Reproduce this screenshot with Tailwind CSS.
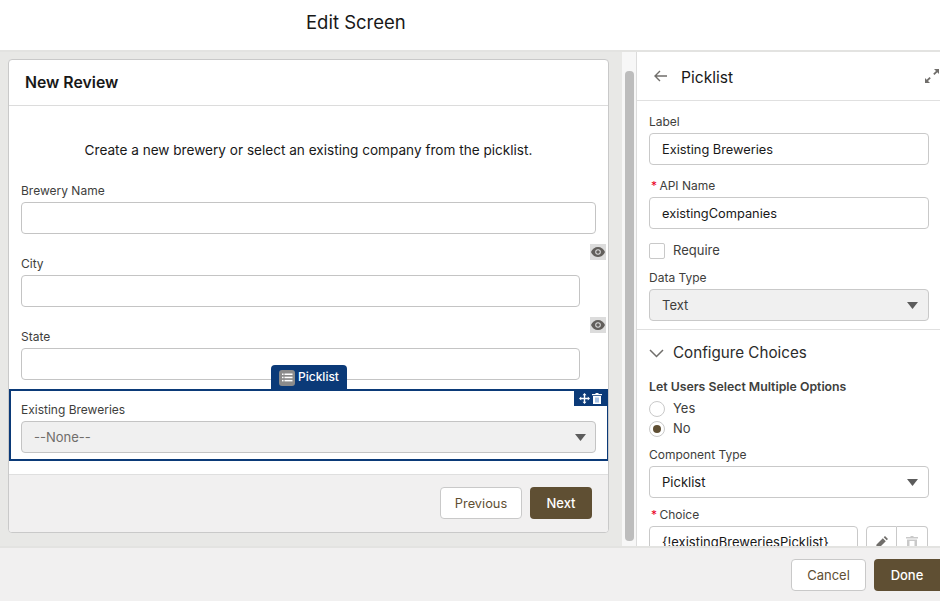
<!DOCTYPE html>
<html lang="en">
<head>
    <meta charset="UTF-8">
    <title>Edit Screen</title>
    <script src="https://cdn.jsdelivr.net/npm/@tailwindcss/browser@4"></script>
</head>
<body class="w-[940px] h-[601px] overflow-hidden bg-white font-['Inter',sans-serif] text-[#181818] flex flex-col">

    <!-- Page title -->
    <header class="h-[50px] shrink-0 bg-white pl-[306px] pt-[10px] text-[18.5px] leading-[24px]">Edit Screen</header>

    <main class="h-[496px] shrink-0 flex border-t-2 border-[#e3e3e1]">
        <!-- Canvas -->
        <section class="w-[622px] shrink-0 bg-[#e8e8e6] pt-[7px] pl-[8px] overflow-hidden">
            <div class="w-[601px] h-[474px] bg-white border border-[#c9c9c9] rounded-[4px] flex flex-col overflow-hidden">
                <div class="h-[46px] shrink-0 border-b border-[#dcdcdc] pl-[16px] pt-[12px] text-[15.8px] leading-[22px] font-semibold">New Review</div>
                <p class="h-[74px] shrink-0 text-center pt-[35px] text-[13.6px] leading-[18px]">Create a new brewery or select an existing company from the picklist.</p>

                <div class="h-[73px] shrink-0 pl-[12px] relative">
                    <label class="block h-[22px] pt-[3px] text-[12px] leading-[16px] text-[#3e3e3c]">Brewery Name</label>
                    <div class="w-[575px] h-[32px] border border-[#c4c4c4] rounded-[4px] bg-white"></div>
                </div>
                <div class="h-[73px] shrink-0 pl-[12px] relative">
                    <label class="block h-[22px] pt-[3px] text-[12px] leading-[16px] text-[#3e3e3c]">City</label>
                    <div class="w-[559px] h-[32px] border border-[#c4c4c4] rounded-[4px] bg-white"></div>
                    <div class="absolute left-[581px] top-[-9px] w-[16px] h-[16px] bg-[#dcdcdc] flex items-center justify-center">
                        <svg width="14" height="10" viewBox="0 0 14 10"><path fill="#625f5c" d="M7 0C3.8 0 1.2 2 0 5c1.2 3 3.800 5 7 5s5.800-2 7-5c-1.200-3-3.800-5-7-5z"/><circle cx="7" cy="5" r="2.800" fill="#dcdcdc"/><circle cx="7" cy="5" r="1.800" fill="#625f5c"/></svg>
                    </div>
                </div>
                <div class="h-[63px] shrink-0 pl-[12px] relative">
                    <label class="block h-[22px] pt-[3px] text-[12px] leading-[16px] text-[#3e3e3c]">State</label>
                    <div class="w-[559px] h-[32px] border border-[#c4c4c4] rounded-[4px] bg-white"></div>
                    <div class="absolute left-[581px] top-[-9px] w-[16px] h-[16px] bg-[#dcdcdc] flex items-center justify-center">
                        <svg width="14" height="10" viewBox="0 0 14 10"><path fill="#625f5c" d="M7 0C3.8 0 1.2 2 0 5c1.2 3 3.800 5 7 5s5.800-2 7-5c-1.200-3-3.800-5-7-5z"/><circle cx="7" cy="5" r="2.800" fill="#dcdcdc"/><circle cx="7" cy="5" r="1.800" fill="#625f5c"/></svg>
                    </div>
                </div>

                <!-- Selected component -->
                <div class="h-[72px] shrink-0 relative border-2 border-[#0b3a78] pl-[10px] pt-[11px] -mr-px">
                    <div class="absolute left-[260px] top-[-26px] w-[76px] h-[25px] bg-[#0b3a78] rounded-t-[4px] flex items-center pl-[8px] gap-[3px] text-white text-[12px] font-medium">
                        <span class="w-[16px] h-[16px] rounded-[3px] bg-[#8b8b8b] flex items-center justify-center">
                            <svg width="11" height="9" viewBox="0 0 11 9" fill="#ffffff"><rect x="0" y="0.500" width="1.500" height="1.500"/><rect x="2.500" y="0.500" width="8" height="1.500"/><rect x="0" y="3.700" width="1.500" height="1.500"/><rect x="2.500" y="3.700" width="8" height="1.500"/><rect x="0" y="6.900" width="1.500" height="1.500"/><rect x="2.500" y="6.900" width="8" height="1.500"/></svg>
                        </span>
                        <span class="pb-[1px]">Picklist</span>
                    </div>
                    <div class="absolute right-0 top-0 w-[33px] h-[15px] bg-[#0b3a78] flex items-center justify-center gap-[2px]">
                        <svg width="11" height="11" viewBox="0 0 11 11" fill="#ffffff"><path d="M5.500 0l2 2.200H6.200v2.600h2.600V3.500L11 5.500 8.800 7.500V6.200H6.200v2.600h1.300l-2 2.200-2-2.200h1.300V6.200H2.200v1.300L0 5.500l2.200-2v1.300h2.600V2.200H3.500z"/></svg>
                        <svg width="10" height="11" viewBox="0 0 10 11"><path fill="#ffffff" d="M3.500 0h3v1H10v1.200H0V1h3.500zM1 3h8v8H1z"/><rect x="3" y="4.500" width="4" height="5" fill="#a9c4e6"/></svg>
                    </div>
                    <label class="block h-[19px] text-[12px] leading-[16px] text-[#3e3e3c]">Existing Breweries</label>
                    <div class="w-[575px] h-[32px] pt-[1px] border border-[#c4c4c4] rounded-[4px] bg-[#f0f0f0] flex items-center justify-between pl-[12px] pr-[9px] text-[13px] text-[#706e6b]">
                        --None--
                        <svg width="11" height="7" viewBox="0 0 11 7"><path fill="#5c5c5c" d="M0 0h11L5.500 7z"/></svg>
                    </div>
                </div>

                <div class="h-[13px] shrink-0"></div>
                <div class="flex-1 bg-[#f1f0f0] border-t border-[#dfdfdf] flex justify-end items-start gap-[8px] pt-[12px] pr-[16px]">
                    <button class="w-[82px] h-[32px] pt-[1px] bg-white border border-[#c9c9c9] rounded-[4px] text-[12.8px] text-[#5f4f33]">Previous</button>
                    <button class="w-[62px] h-[32px] pt-[1px] bg-[#5f4f33] rounded-[4px] text-[13px] font-medium text-white">Next</button>
                </div>
            </div>
        </section>

        <!-- Scrollbar -->
        <div class="w-[14px] shrink-0 bg-[#f7f7f7] pt-[19px] pl-[3px]">
            <div class="w-[9px] h-[470px] rounded-[4px] bg-[#bdbdbd]"></div>
        </div>
        <div class="w-[1px] shrink-0 bg-[#dcdcdc]"></div>

        <!-- Properties panel -->
        <aside class="flex-1 bg-white overflow-hidden">
            <div class="h-[49px] border-b border-[#e0e0e0] flex items-center pl-[17px] pr-[1px]">
                <svg width="13" height="12" viewBox="0 0 13 12" fill="none" stroke="#706e6b" stroke-width="1.400"><path d="M13 6H1M6 1L1 6l5 5"/></svg>
                <span class="ml-[14px] pt-[4px] text-[15.6px] leading-[22px]">Picklist</span>
                <svg class="ml-auto" width="14" height="14" viewBox="0 0 14 14" fill="#706e6b"><path d="M9 0h5v5l-1.700-1.700-2.800 2.800-1.300-1.300 2.800-2.800zM0 14V9l1.700 1.700 2.800-2.800 1.300 1.300-2.800 2.800L5 14z"/></svg>
            </div>

            <div class="px-[12px] h-[229px] border-b border-[#e0e0e0]">
                <label class="block h-[32px] pt-[13px] text-[12px] leading-[16px] text-[#3e3e3c]">Label</label>
                <div class="w-[280px] h-[32px] pt-[2px] border border-[#c9c9c9] rounded-[4px] flex items-center pl-[12px] text-[12.8px]">Existing Breweries</div>
                <label class="block h-[32px] pt-[13px] pl-[2px] text-[12px] leading-[16px] text-[#3e3e3c]"><span class="text-[#ea001e] mr-[-1px]">*</span> API Name</label>
                <div class="w-[280px] h-[32px] pt-[2px] border border-[#c9c9c9] rounded-[4px] flex items-center pl-[12px] text-[12.8px]">existingCompanies</div>
                <div class="flex items-center h-[16px] mt-[14px] gap-[8px] text-[13px] text-[#3e3e3c]">
                    <span class="w-[16px] h-[16px] border border-[#c9c9c9] rounded-[2px]"></span>
                    Require
                </div>
                <label class="block h-[30px] pt-[11px] text-[12px] leading-[16px] text-[#3e3e3c]">Data Type</label>
                <div class="w-[280px] h-[32px] pt-[1px] border border-[#c9c9c9] rounded-[4px] bg-[#f0f0f0] flex items-center justify-between pl-[12px] pr-[10px] text-[13px] text-[#3e3e3c]">
                    Text
                    <svg width="11" height="7" viewBox="0 0 11 7"><path fill="#5c5c5c" d="M0 0h11L5.500 7z"/></svg>
                </div>
            </div>

            <div class="px-[12px]">
                <div class="flex items-center h-[46px] gap-[9px] text-[15.2px] text-[#2b2b2b]">
                    <svg width="15" height="9" viewBox="0 0 15 9" fill="none" stroke="#706e6b" stroke-width="1.500"><path d="M1 1l6.500 6.500L14 1"/></svg>
                    Configure Choices
                </div>
                <div class="h-[20px] mt-[1px] flex items-center text-[12.3px] font-semibold text-[#3e3e3c]">Let Users Select Multiple Options</div>
                <div class="flex items-center h-[20px] mt-[2px] gap-[8px] text-[13px] text-[#3e3e3c]">
                    <span class="w-[16px] h-[16px] border border-[#c9c9c9] rounded-full"></span>
                    Yes
                </div>
                <div class="flex items-center h-[20px] gap-[8px] text-[13px] text-[#3e3e3c]">
                    <span class="w-[16px] h-[16px] border border-[#c9c9c9] rounded-full flex items-center justify-center"><span class="w-[8px] h-[8px] rounded-full bg-[#5f4f33]"></span></span>
                    No
                </div>
                <label class="block h-[27px] pt-[8px] text-[12px] leading-[16px] text-[#3e3e3c]">Component Type</label>
                <div class="w-[280px] h-[32px] pt-[1px] border border-[#c9c9c9] rounded-[4px] flex items-center justify-between pl-[12px] pr-[10px] text-[13px]">
                    Picklist
                    <svg width="11" height="7" viewBox="0 0 11 7"><path fill="#5c5c5c" d="M0 0h11L5.500 7z"/></svg>
                </div>
                <label class="block h-[28px] pt-[9px] pl-[2px] text-[12px] leading-[16px] text-[#3e3e3c]"><span class="text-[#ea001e] mr-[-1px]">*</span> Choice</label>
                <div class="flex">
                    <div class="w-[209px] h-[32px] pt-[2px] border border-[#c9c9c9] rounded-[4px] flex items-center pl-[12px] text-[13px] shrink-0">{!existingBreweriesPicklist}</div>
                    <div class="ml-[8px] w-[32px] h-[32px] border border-[#c9c9c9] rounded-l-[4px] flex items-center justify-center">
                        <svg width="12" height="12" viewBox="0 0 12 12" fill="#706e6b"><path d="M9 0l3 3-1.300 1.300-3-3zM6.800 2.200l3 3L3.500 11.500 0 12l.5-3.500z"/></svg>
                    </div>
                    <div class="w-[32px] h-[32px] border border-l-0 border-[#c9c9c9] rounded-r-[4px] flex items-center justify-center">
                        <svg width="12" height="12" viewBox="0 0 12 12" fill="#c9c9c9"><path d="M4.500 0h3v1H12v1.500H0V1h4.500zM1 3.500h10V12H1zm2.500 1.500v5.500h5V5z"/></svg>
                    </div>
                </div>
            </div>
        </aside>
    </main>

    <!-- Footer actions -->
    <footer class="flex-1 bg-[#f1f0f0] border-t-2 border-[#e3e3e1] flex justify-end items-start gap-[8px] pt-[11px]">
        <button class="w-[75px] h-[32px] pt-[1px] bg-white border border-[#c9c9c9] rounded-[4px] text-[13px] text-[#5f4f33]">Cancel</button>
        <button class="w-[66px] h-[32px] pt-[1px] bg-[#5f4f33] rounded-l-[4px] text-[13px] font-medium text-white">Done</button>
    </footer>
</body>
</html>
